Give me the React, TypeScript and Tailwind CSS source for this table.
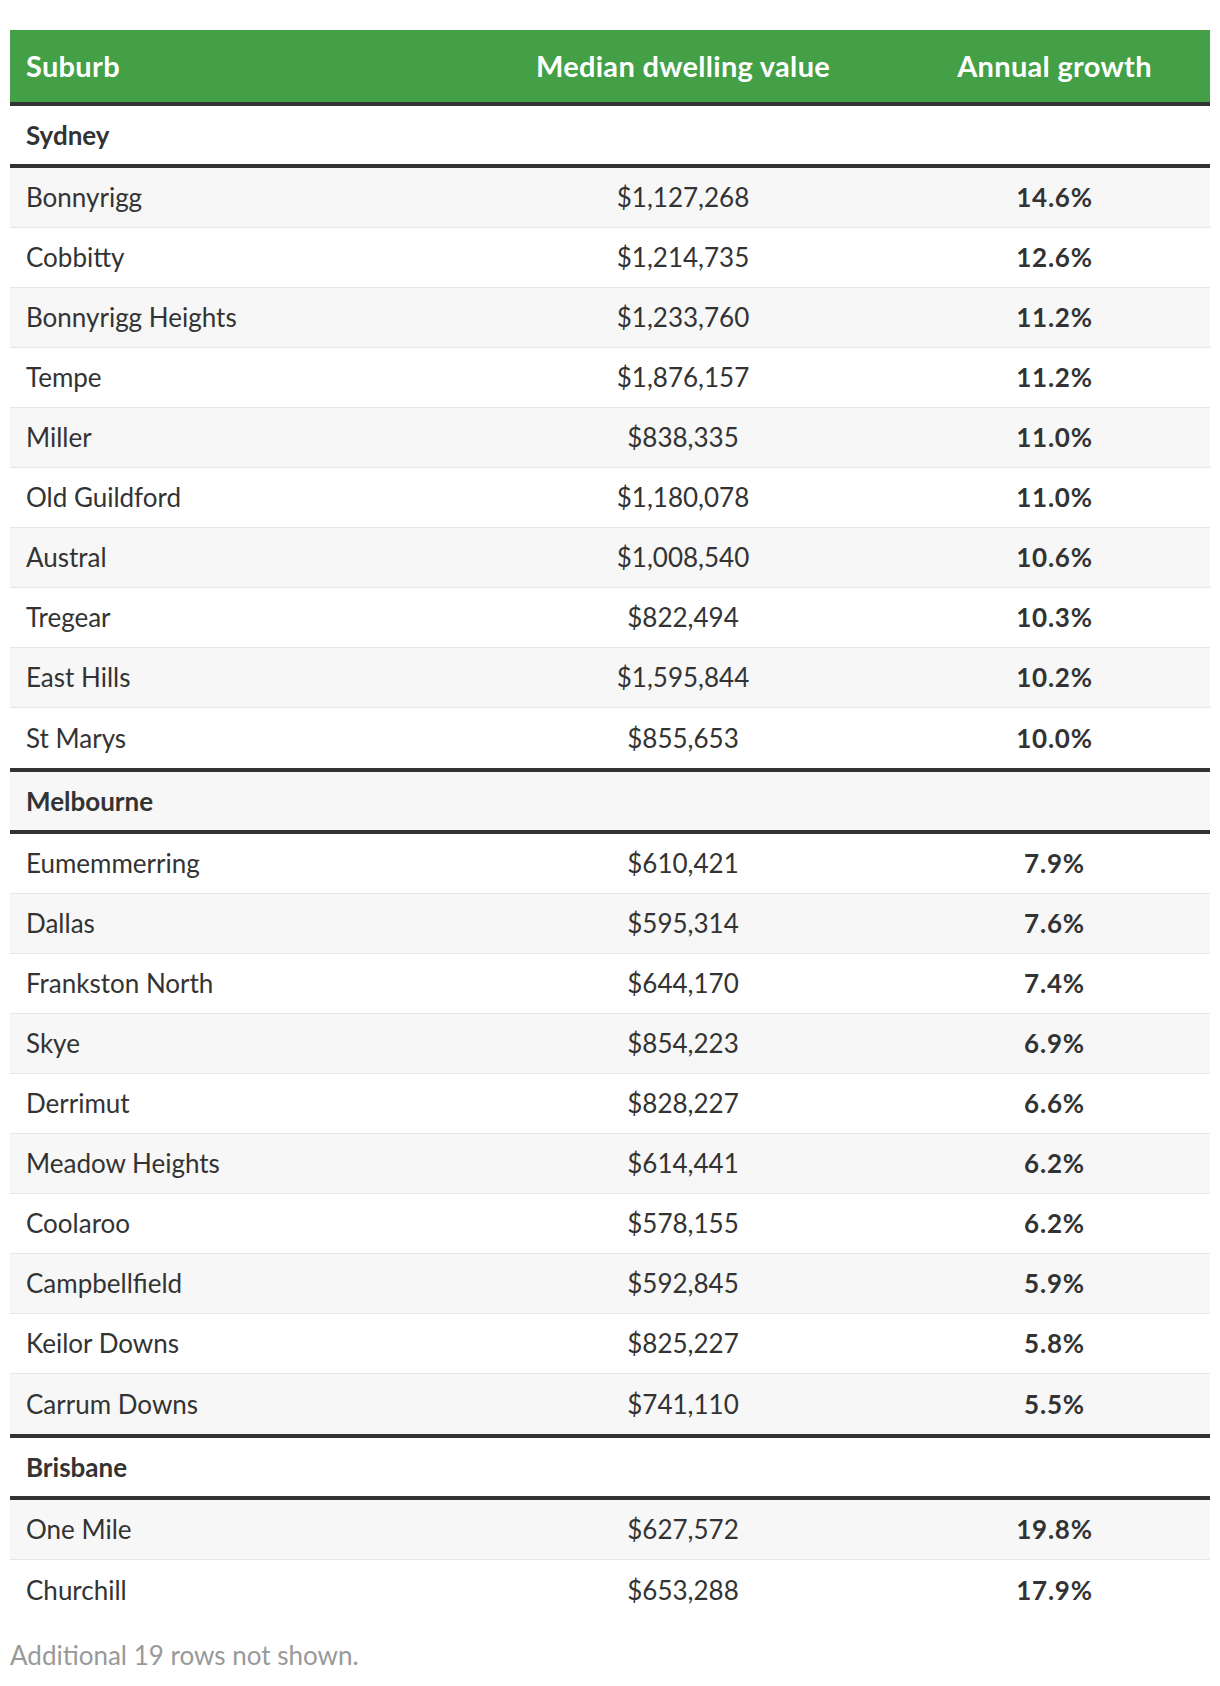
import React from "react";

type Row = { suburb: string; value: string; growth: string };
type Group = { city: string; rows: Row[] };

const GROUPS: Group[] = [
  {
    city: "Sydney",
    rows: [
      { suburb: "Bonnyrigg", value: "$1,127,268", growth: "14.6%" },
      { suburb: "Cobbitty", value: "$1,214,735", growth: "12.6%" },
      { suburb: "Bonnyrigg Heights", value: "$1,233,760", growth: "11.2%" },
      { suburb: "Tempe", value: "$1,876,157", growth: "11.2%" },
      { suburb: "Miller", value: "$838,335", growth: "11.0%" },
      { suburb: "Old Guildford", value: "$1,180,078", growth: "11.0%" },
      { suburb: "Austral", value: "$1,008,540", growth: "10.6%" },
      { suburb: "Tregear", value: "$822,494", growth: "10.3%" },
      { suburb: "East Hills", value: "$1,595,844", growth: "10.2%" },
      { suburb: "St Marys", value: "$855,653", growth: "10.0%" },
    ],
  },
  {
    city: "Melbourne",
    rows: [
      { suburb: "Eumemmerring", value: "$610,421", growth: "7.9%" },
      { suburb: "Dallas", value: "$595,314", growth: "7.6%" },
      { suburb: "Frankston North", value: "$644,170", growth: "7.4%" },
      { suburb: "Skye", value: "$854,223", growth: "6.9%" },
      { suburb: "Derrimut", value: "$828,227", growth: "6.6%" },
      { suburb: "Meadow Heights", value: "$614,441", growth: "6.2%" },
      { suburb: "Coolaroo", value: "$578,155", growth: "6.2%" },
      { suburb: "Campbellfield", value: "$592,845", growth: "5.9%" },
      { suburb: "Keilor Downs", value: "$825,227", growth: "5.8%" },
      { suburb: "Carrum Downs", value: "$741,110", growth: "5.5%" },
    ],
  },
  {
    city: "Brisbane",
    rows: [
      { suburb: "One Mile", value: "$627,572", growth: "19.8%" },
      { suburb: "Churchill", value: "$653,288", growth: "17.9%" },
    ],
  },
];

const COLS = "grid grid-cols-[457px_432px_311px] items-center";

export default function App() {
  // zebra striping runs across group rows and data rows alike
  let index = 0;

  return (
    <div className="min-h-screen bg-white px-[10px] pt-[30px] font-['Lato',sans-serif] text-[26px] text-[#333]">
      <div className="w-[1200px]">
        <div
          className={`${COLS} h-[72px] bg-[#43a047] text-[29px] font-bold tracking-[0.3px] text-white`}
        >
          <div className="pl-4">Suburb</div>
          <div className="text-center">Median dwelling value</div>
          <div className="text-center">Annual growth</div>
        </div>

        {GROUPS.map((group) => {
          index += 1;
          const groupStripe = index % 2 === 0 ? "bg-[#f7f7f7]" : "bg-white";
          return (
            <div key={group.city}>
              <div
                className={`${COLS} h-[66px] border-y-4 border-[#333] font-bold ${groupStripe}`}
              >
                <div className="pl-4">{group.city}</div>
              </div>
              {group.rows.map((row, i) => {
                index += 1;
                const stripe = index % 2 === 0 ? "bg-[#f7f7f7]" : "bg-white";
                const last = i === group.rows.length - 1;
                return (
                  <div
                    key={row.suburb}
                    className={`${COLS} h-[60px] ${stripe} ${
                      last ? "" : "border-b border-[#e6e6e6]"
                    }`}
                  >
                    <div className="pl-4">{row.suburb}</div>
                    <div className="text-center">{row.value}</div>
                    <div className="text-center font-bold tracking-[0.8px]">
                      {row.growth}
                    </div>
                  </div>
                );
              })}
            </div>
          );
        })}

        <p className="mt-[19px] leading-[32px] text-[#999]">
          Additional 19 rows not shown.
        </p>
      </div>
    </div>
  );
}
